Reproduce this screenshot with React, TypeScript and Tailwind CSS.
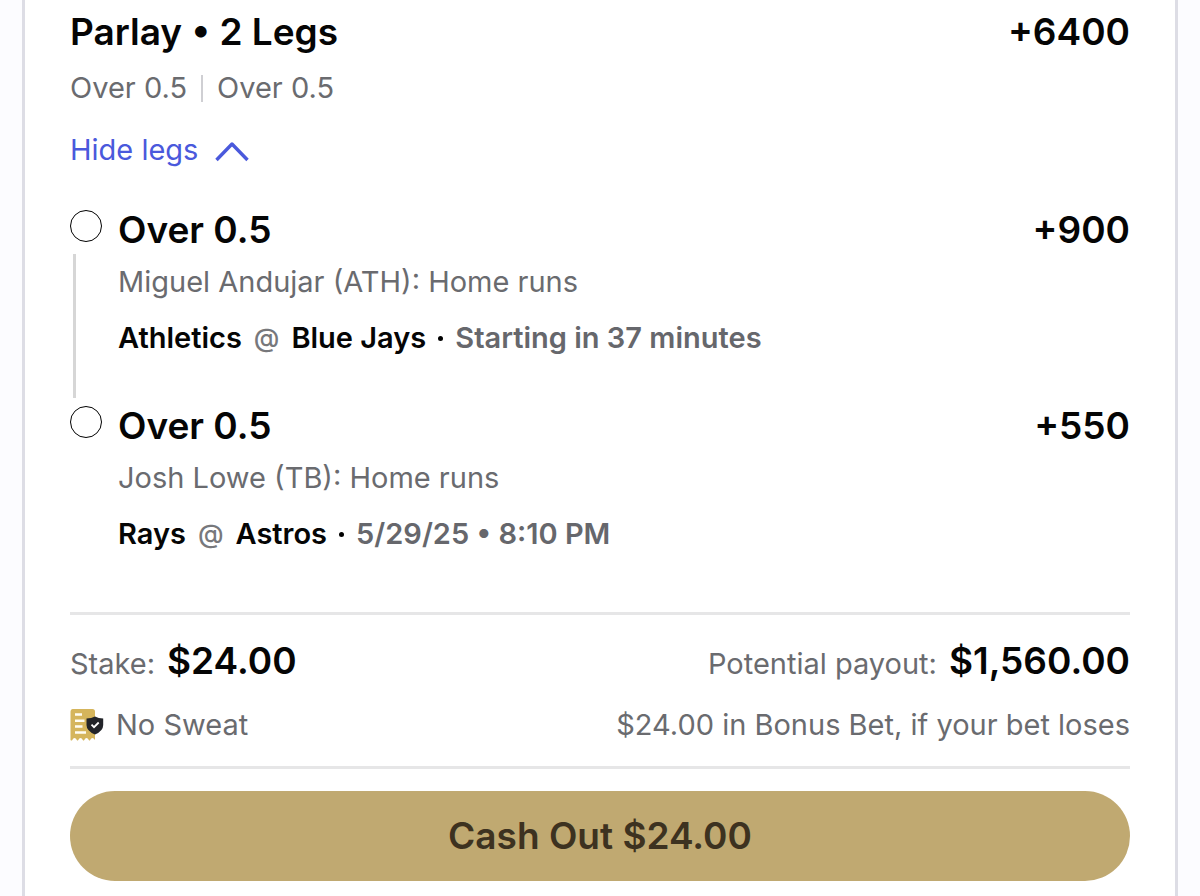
import { useState } from "react";

type Leg = {
  pick: string;
  odds: string;
  market: string;
  away: string;
  home: string;
  status: string;
};

const legs: Leg[] = [
  {
    pick: "Over 0.5",
    odds: "+900",
    market: "Miguel Andujar (ATH): Home runs",
    away: "Athletics",
    home: "Blue Jays",
    status: "Starting in 37 minutes",
  },
  {
    pick: "Over 0.5",
    odds: "+550",
    market: "Josh Lowe (TB): Home runs",
    away: "Rays",
    home: "Astros",
    status: "5/29/25 • 8:10 PM",
  },
];

function NoSweatIcon() {
  return (
    <svg className="h-8 w-[34px] shrink-0" viewBox="0 0 34 32" aria-hidden="true">
      <path
        d="M2.500 0H22.500Q25 0 25 2.500V31Q23.700 29 22.500 29Q21 29 20.200 31Q19.500 32 18.800 31Q17.800 29 16.500 29Q15.200 29 14.300 31Q13.500 32 12.800 31Q11.800 29 10.500 29Q9.200 29 8.300 31Q7.500 32 6.800 31Q5.800 29 4.500 29Q3.200 29 2.300 31Q1.500 32 0.500 31V2.500Q0.500 0 2.500 0Z"
        fill="#d5b55c"
      />
      <path d="M5 5.500H12M5 11.800H14.500M5 17.500H12.500M5 23.500H16" stroke="#fffdf2" strokeWidth="2.400" />
      <path
        d="M16.500 9.500Q21.500 9.300 25 7.500Q28.500 9.300 33.200 9.500V16Q33.200 22 25 25.500Q16.500 22 16.500 16Z"
        fill="#222429"
      />
      <path d="M21.500 15.700L24 18.200L28.700 13.500" fill="none" stroke="#fff" strokeWidth="1.800" />
    </svg>
  );
}

function LegItem({ leg, last }: { leg: Leg; last: boolean }) {
  return (
    <li className="flex gap-4">
      <div className="flex w-8 shrink-0 flex-col items-start pt-1">
        <span className="size-8 rounded-full border-[1.5px] border-black" />
        {!last && <span className="mt-3 mb-1 ml-[3px] w-[3px] flex-1 bg-[#d6d6d6]" />}
      </div>
      <div className={last ? "min-w-0 flex-1" : "min-w-0 flex-1 pb-11"}>
        <div className="flex justify-between text-[37px] leading-12 font-semibold">
          <h2>{leg.pick}</h2>
          <span>{leg.odds}</span>
        </div>
        <p className="mt-2 text-[29px] leading-10 text-[#6a6b6f]">{leg.market}</p>
        <p className="mt-4 flex flex-wrap items-center gap-x-3 text-[29px] leading-10 font-semibold">
          <span>{leg.away}</span>
          <span className="text-[26px] font-medium text-[#77787c]">@</span>
          <span>{leg.home}</span>
          <span className="size-[5px] rounded-full bg-black" />
          <span className="text-[#66676c]">{leg.status}</span>
        </p>
      </div>
    </li>
  );
}

export default function App() {
  const [open, setOpen] = useState(true);
  return (
    <div className="min-h-screen bg-[#fcfcff] px-[22px] font-['Inter',sans-serif] text-[#050505]">
      <main className="min-h-screen border-x-[3px] border-[#dddde5] bg-white px-[45px] pt-2 pb-[15px]">
        <header>
          <div className="flex justify-between text-[37px] leading-12 font-semibold">
            <h1>Parlay • 2 Legs</h1>
            <span>+6400</span>
          </div>
          <p className="mt-3 flex items-center gap-3.5 text-[29px] leading-10 text-[#6a6b6f]">
            <span>Over 0.5</span>
            <span className="h-[27px] w-0.5 bg-[#cfcfd3]" />
            <span>Over 0.5</span>
          </p>
          <button
            type="button"
            aria-expanded={open}
            onClick={() => setOpen(!open)}
            className="mt-[22px] flex items-center gap-4 text-[29px] leading-10 text-[#4a59dc]"
          >
            Hide legs
            <svg className={open ? "h-6 w-9" : "h-6 w-9 rotate-180"} viewBox="0 0 36 24" aria-hidden="true">
              <path d="M2.500 22L18 6L33.500 22" fill="none" stroke="currentColor" strokeWidth="3.400" strokeLinejoin="round" />
            </svg>
          </button>
        </header>

        {open && (
          <ul className="mt-9">
            {legs.map((leg, i) => (
              <LegItem key={leg.market} leg={leg} last={i === legs.length - 1} />
            ))}
          </ul>
        )}

        <section className="mt-[58px] border-y-[3px] border-[#e6e6e7] pt-[22px] pb-[21px]">
          <div className="flex items-baseline justify-between leading-12">
            <p className="flex items-baseline gap-3">
              <span className="text-[29px] text-[#6a6b6f]">Stake:</span>
              <span className="text-[37px] font-semibold">$24.00</span>
            </p>
            <p className="flex items-baseline gap-3">
              <span className="text-[29px] text-[#6a6b6f]">Potential payout:</span>
              <span className="text-[37px] font-semibold">$1,560.00</span>
            </p>
          </div>
          <div className="mt-[17px] flex items-center justify-between text-[29px] leading-10 text-[#6a6b6f]">
            <p className="flex items-center gap-3">
              <NoSweatIcon />
              No Sweat
            </p>
            <p>$24.00 in Bonus Bet, if your bet loses</p>
          </div>
        </section>

        <button
          type="button"
          className="mt-[22px] h-[90px] w-full rounded-full bg-[#c0a971] text-[37px] font-semibold text-[#3d3220]"
        >
          Cash Out $24.00
        </button>
      </main>
    </div>
  );
}
